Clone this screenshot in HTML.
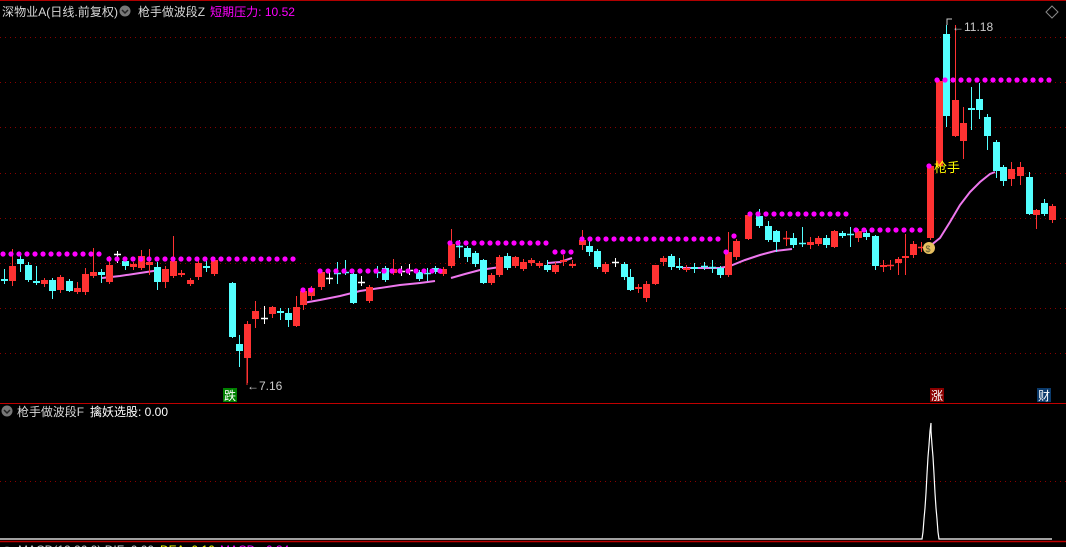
<!DOCTYPE html>
<html><head><meta charset="utf-8"><style>
html,body{margin:0;padding:0;background:#000;width:1066px;height:547px;overflow:hidden}
svg{display:block}
text{font-family:"Liberation Sans","Noto Sans CJK SC",sans-serif}
</style></head><body>
<svg id="s" width="1066" height="547" xmlns="http://www.w3.org/2000/svg">
<rect width="1066" height="547" fill="#000"/>
<line x1="0" y1="0.5" x2="1066" y2="0.5" stroke="#b00000"/>
<g stroke="#8a0000" stroke-dasharray="1,4">
<line x1="0" y1="37.5" x2="1066" y2="37.5"/><line x1="0" y1="82.5" x2="1066" y2="82.5"/>
<line x1="0" y1="127.5" x2="1066" y2="127.5"/><line x1="0" y1="173.5" x2="1066" y2="173.5"/>
<line x1="0" y1="218.5" x2="1066" y2="218.5"/><line x1="0" y1="263.5" x2="1066" y2="263.5"/>
<line x1="0" y1="308.5" x2="1066" y2="308.5"/><line x1="0" y1="353.5" x2="1066" y2="353.5"/>
<line x1="0" y1="481.5" x2="1066" y2="481.5"/>
</g>
<line x1="0" y1="403.5" x2="1066" y2="403.5" stroke="#c00000"/>
<line x1="0" y1="541.5" x2="1066" y2="541.5" stroke="#c00000" stroke-width="1.5"/>
<g id="ma" fill="none" stroke="#ee77ee" stroke-width="2">
<polyline points="102,278 120,276 140,273 160,270"/>
<polyline points="303,303 320,300 340,296 360,291 380,288 400,285 420,283 435,281"/>
<polyline points="451,278 465,274 480,270 500,267"/>
<polyline points="548,263 560,262 572,258"/>
<polyline points="682,268 700,268 720,268 730,266 745,260 760,255 775,251 792,249"/>
<polyline points="930,246 940,238 950,222 960,205 970,192 980,182 990,174 995,172"/>
</g>
<g id="c"></g>
<g id="d" fill="#ff00ff"></g>
<text x="2" y="16" font-size="12" fill="#d8d8d8" textLength="116" lengthAdjust="spacingAndGlyphs">深物业A(日线.前复权)</text>
<circle cx="125" cy="11" r="5.5" fill="#777"/><path d="M122,10 l3,3 l3,-3" stroke="#222" stroke-width="1.5" fill="none"/>
<text x="138" y="16" font-size="12" fill="#d8d8d8" textLength="67" lengthAdjust="spacingAndGlyphs">枪手做波段Z</text>
<text x="210" y="16" font-size="12" fill="#ff00ff" textLength="85" lengthAdjust="spacingAndGlyphs">短期压力: 10.52</text>
<path d="M1052,6 l6,6 l-6,6 l-6,-6z" stroke="#888" fill="none"/>
<text x="952" y="31" font-size="12" fill="#ccc">←11.18</text>
<path d="M947,25 v-6 h5" stroke="#ccc" fill="none"/>
<text x="247" y="390" font-size="12" fill="#ccc">←7.16</text>
<line x1="247" y1="357" x2="247" y2="385" stroke="#ff3232"/>
<text x="934" y="172" font-size="13" fill="#ffff00">枪手</text>
<rect x="223" y="388" width="14" height="14" fill="#008000"/><text x="224" y="400" font-size="12" fill="#fff">跌</text>
<rect x="930" y="388" width="14" height="14" fill="#8b0000"/><text x="931" y="400" font-size="12" fill="#fff">涨</text>
<rect x="1037" y="388" width="14" height="14" fill="#0b3a6b"/><text x="1038" y="400" font-size="12" fill="#fff">财</text>
<circle cx="929" cy="248" r="6" fill="#e8c060"/><text x="925.5" y="252" font-size="9" fill="#553">$</text>
<circle cx="7" cy="411" r="5.5" fill="#777"/><path d="M4,410 l3,3 l3,-3" stroke="#222" stroke-width="1.5" fill="none"/>
<text x="17" y="416" font-size="12" fill="#d8d8d8" textLength="67" lengthAdjust="spacingAndGlyphs">枪手做波段F</text>
<text x="90" y="416" font-size="12" fill="#fff" textLength="78" lengthAdjust="spacingAndGlyphs">擒妖选股: 0.00</text>
<polyline points="0,539 922,539 923,532 924,519 925,508 926,493 927,474 928,457 929,445 930,431 931,423 931,431 932,445 933,457 934,474 935,493 936,508 937,519 938,532 939,539 1052,539" fill="none" stroke="#fff" stroke-width="1.2"/>
<circle cx="7" cy="552" r="5.5" fill="#777"/>
<text x="18" y="554" font-size="12" fill="#ccc">MACD(12,26,9) DIF: 0.00</text>
<text x="160" y="554" font-size="12" fill="#ff0">DEA: 0.16</text>
<text x="220" y="554" font-size="12" fill="#f0f">MACD: -0.34</text>
</svg>
<script>
var C=[[4,279,281,269,284,'c'],[12,266,281,249,286,'r'],[20,259,264,255,272,'c'],[28,265,280,262,282,'c'],[36,281,283,266,285,'c'],[44,280,284,278,287,'r'],[52,280,291,278,299,'c'],[60,277,290,275,293,'r'],[69,281,291,279,292,'c'],[77,288,292,282,294,'r'],[85,274,292,268,295,'r'],[93,272,276,248,278,'r'],[101,272,275,269,283,'c'],[109,265,282,256,284,'r'],[117,254,255,251,263,'w'],[125,261,266,259,270,'c'],[133,264,267,262,270,'r'],[141,256,268,250,270,'r'],[149,262,265,249,275,'r'],[157,267,282,262,290,'c'],[165,269,282,266,288,'r'],[173,261,276,236,278,'r'],[181,273,275,270,277,'r'],[190,280,284,278,286,'r'],[198,263,277,260,280,'r'],[206,266,268,261,272,'c'],[214,260,274,257,276,'r'],[232,283,337,282,338,'c'],[239,344,351,335,367,'c'],[247,324,358,321,383,'r'],[255,311,319,301,328,'r'],[264,318,319,306,324,'w'],[272,307,314,306,318,'r'],[280,311,313,308,320,'c'],[288,313,320,308,327,'c'],[296,307,326,296,327,'r'],[303,291,305,288,310,'r'],[311,288,296,286,300,'r'],[321,272,287,270,290,'r'],[329,278,279,272,284,'w'],[337,273,274,262,284,'c'],[345,272,273,260,275,'c'],[353,274,303,272,304,'c'],[361,282,283,276,286,'w'],[369,287,301,285,303,'r'],[377,272,273,266,278,'c'],[385,268,280,266,282,'c'],[393,269,273,259,275,'r'],[401,271,272,266,276,'w'],[409,270,271,264,275,'w'],[419,272,279,270,281,'c'],[427,273,274,268,281,'c'],[435,268,272,266,274,'c'],[443,269,274,267,276,'r'],[451,244,266,229,268,'r'],[459,246,247,240,258,'c'],[467,248,257,246,262,'c'],[475,253,264,251,267,'c'],[483,260,283,259,284,'c'],[491,275,283,273,285,'r'],[499,257,275,255,277,'r'],[507,256,268,253,270,'c'],[515,257,266,256,268,'r'],[523,262,269,259,271,'r'],[531,260,263,258,266,'r'],[539,263,266,261,268,'r'],[547,265,270,260,272,'c'],[555,265,272,262,274,'r'],[563,260,262,255,266,'r'],[572,264,266,260,268,'r'],[582,240,245,230,250,'r'],[589,246,252,241,256,'c'],[597,251,267,249,269,'c'],[605,264,272,262,274,'r'],[615,262,263,258,267,'w'],[624,264,277,262,280,'c'],[630,277,290,269,291,'c'],[638,287,289,284,293,'r'],[646,284,298,281,302,'r'],[655,265,284,265,285,'r'],[663,258,262,256,266,'r'],[671,256,267,254,270,'c'],[679,266,268,258,270,'c'],[686,268,270,265,272,'r'],[694,267,269,263,273,'c'],[704,266,267,262,270,'c'],[712,267,268,260,273,'c'],[720,268,275,266,278,'c'],[728,252,275,232,277,'r'],[736,241,257,239,260,'r'],[748,215,239,212,240,'r'],[759,216,226,209,228,'c'],[768,226,240,221,242,'c'],[776,231,242,230,252,'c'],[786,238,239,231,246,'r'],[793,238,245,233,248,'c'],[802,243,244,227,247,'c'],[810,242,245,237,249,'r'],[818,238,244,236,246,'r'],[826,238,245,235,248,'c'],[834,231,247,230,248,'r'],[842,233,236,231,238,'c'],[850,234,235,227,247,'c'],[858,231,238,229,242,'r'],[866,233,237,230,240,'c'],[875,236,266,235,270,'c'],[883,265,267,260,272,'r'],[890,265,266,260,270,'r'],[898,259,263,257,275,'r'],[905,256,258,234,275,'r'],[913,244,255,241,258,'r'],[921,247,248,242,252,'r'],[930,166,238,165,240,'r'],[939,81,166,80,167,'r'],[946,34,116,25,127,'c'],[955,100,136,25,137,'r'],[963,123,141,107,159,'r'],[971,108,110,87,130,'c'],[979,99,110,83,119,'c'],[987,117,136,114,150,'c'],[996,142,171,140,178,'c'],[1003,167,181,165,186,'c'],[1011,169,179,162,186,'r'],[1020,167,176,162,185,'r'],[1029,177,214,172,215,'c'],[1036,210,215,209,229,'r'],[1044,203,214,199,216,'c'],[1052,206,220,204,223,'r']];
var col={r:'#ff3232',c:'#54ffff',w:'#ffffff'},h='';
C.forEach(function(a){var f=col[a[5]];h+='<line x1="'+(a[0]+.5)+'" y1="'+a[3]+'" x2="'+(a[0]+.5)+'" y2="'+a[4]+'" stroke="'+f+'"/>';var t=a[2]-a[1];if(t<2){h+='<line x1="'+(a[0]-3)+'" y1="'+(a[1]+.5)+'" x2="'+(a[0]+4)+'" y2="'+(a[1]+.5)+'" stroke="'+f+'" stroke-width="1.5"/>';}else h+='<rect x="'+(a[0]-3)+'" y="'+a[1]+'" width="7" height="'+t+'" fill="'+f+'"/>';});
document.getElementById('c').innerHTML=h;
var D=[[3,100,254],[109,300,259],[303,312,290],[320,442,271],[450,548,243],[555,572,252],[582,718,239],[726,726,252],[734,734,236],[750,850,214],[856,921,230],[929,929,166],[937,1052,80]],g='';
D.forEach(function(d){for(var x=d[0];x<=d[1];x+=8)g+='<circle cx="'+x+'" cy="'+d[2]+'" r="2.6"/>';});
document.getElementById('d').innerHTML=g;
</script>
</body></html>
